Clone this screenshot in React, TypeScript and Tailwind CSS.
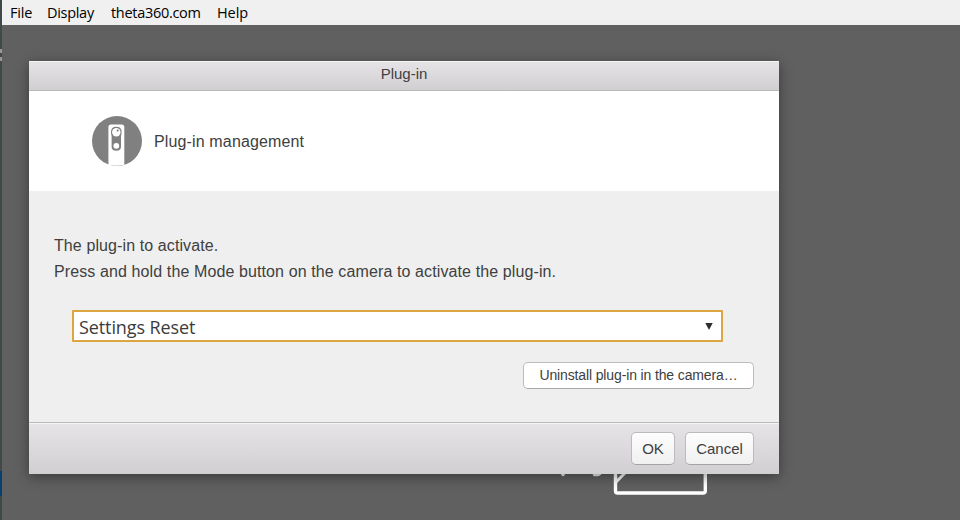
import React from "react";

function MenuBar() {
  return (
    <nav className="flex h-[25px] shrink-0 bg-[#f0f0f0] pl-2 font-['Open_Sans','Noto_Sans',sans-serif] text-[14.5px] leading-[25px] text-black">
      <span className="w-[37px] whitespace-nowrap tracking-[-0.2px]">File</span>
      <span className="w-[64px] whitespace-nowrap tracking-[-0.3px]">Display</span>
      <span className="w-[106px] whitespace-nowrap tracking-[-0.3px]">theta360.com</span>
      <span className="whitespace-nowrap tracking-[-0.1px]">Help</span>
    </nav>
  );
}

function CameraIcon() {
  return (
    <svg width="50" height="50" viewBox="0 0 50 50" className="shrink-0">
      <circle cx="25" cy="25" r="25" fill="#808080" />
      <path d="M16.400 48.800V11Q16.400 8.500 19 8.500H29.700Q32.300 8.500 32.300 11V48.800Q24.500 50.600 16.400 48.800Z" fill="#fff" />
      <path d="M19 16Q19 10.700 24.300 10.700T29.600 16Q29.600 18.500 29 20V30.500Q29 34.800 24.300 34.800T19.600 30.500V20Q19 18.500 19 16Z" fill="#808080" />
      <circle cx="24.300" cy="16.200" r="4.200" fill="#fff" />
      <circle cx="25.700" cy="14.600" r="1.100" fill="#808080" />
      <circle cx="24.300" cy="29.800" r="2.900" fill="#fff" />
    </svg>
  );
}

function Backdrop() {
  return (
    <svg className="absolute left-[540px] top-[460px]" width="200" height="50" viewBox="0 0 200 50" fill="none">
      <path d="M20.500 10L23 14.500L25.500 10" stroke="#eee" strokeWidth="3.500" strokeLinecap="round" strokeLinejoin="round" />
      <path d="M54.500 14.600H57Q60 14.300 61 11" stroke="#eee" strokeWidth="3.500" strokeLinecap="round" />
      <path d="M75.500 8V31Q75.500 33 77.500 33H163Q165.300 33 165.300 31V8" stroke="#fff" strokeWidth="3.400" />
      <path d="M76 22L86 12" stroke="#f5f5f5" strokeWidth="3" />
    </svg>
  );
}

function Dialog() {
  return (
    <section className="relative flex h-[413px] w-[750px] flex-col bg-[#efefef] text-[16px] text-[#404040] shadow-[0_3px_12px_rgba(0,0,0,0.4)]">
      <header className="h-[30px] shrink-0 border-b border-[#bbb9bc] bg-linear-to-b from-[#e7e4e7] to-[#d2cfd2] text-center text-[15px] leading-[26px] shadow-[inset_0_1px_0_#f6f4f6]">
        Plug-in
      </header>
      <div className="flex h-[100px] shrink-0 items-center gap-3 bg-white pl-[63px]">
        <CameraIcon />
        <span className="pt-[2px] tracking-[0.14px]">Plug-in management</span>
      </div>
      <div className="flex h-[231px] shrink-0 flex-col px-[25px] pt-[42px]">
        <p className="leading-[26px] tracking-[0.1px]">The plug-in to activate.</p>
        <p className="leading-[26px] tracking-[0.11px]">Press and hold the Mode button on the camera to activate the plug-in.</p>
        <button className="mt-[25px] ml-[18px] flex h-[32px] w-[651px] shrink-0 items-center justify-between rounded-[1px] border-2 border-[#dda53f] bg-white pr-[8px] pl-[5px] font-['Open_Sans','Noto_Sans',sans-serif] text-[18px] leading-7 text-[#3c3c3c]">
          <span className="pt-[2px] tracking-[-0.1px]">Settings Reset</span>
          <svg width="8" height="8" viewBox="0 0 8 8">
            <path d="M0.300 1H7.700L4 8Z" fill="#2d2d2d" />
          </svg>
        </button>
        <button className="mt-5 h-[27px] w-[231px] shrink-0 self-end rounded-[5px] border border-[#bcbcbc] border-b-[#a8a8a8] bg-white text-[14px] leading-[25px] tracking-[-0.13px]">
          Uninstall plug-in in the camera…
        </button>
      </div>
      <footer className="flex h-[52px] shrink-0 justify-end gap-[10px] border-t border-[#bbb9bc] bg-linear-to-b from-[#e7e4e7] to-[#d2cfd2] pt-[9px] pr-[25px] shadow-[inset_0_1px_0_#f6f4f6]">
        <button className="h-[33px] w-[44px] rounded-[5px] border border-[#bcbabd] border-b-[#a5a3a6] bg-linear-to-b from-[#fdfdfd] to-[#f0f0f0] pt-[2px] text-[15px]">OK</button>
        <button className="h-[33px] w-[69px] rounded-[5px] border border-[#bcbabd] border-b-[#a5a3a6] bg-linear-to-b from-[#fdfdfd] to-[#f0f0f0] pt-[2px] text-[15px]">Cancel</button>
      </footer>
    </section>
  );
}

export default function App() {
  return (
    <div className="relative flex h-[520px] w-[960px] overflow-hidden bg-[#606060] font-['Liberation_Sans',Arial,sans-serif]">
      <aside className="flex w-[2px] shrink-0 flex-col bg-[#414849]">
        <div className="mt-[49px] h-[4px] bg-[#999]" />
        <div className="mt-[4px] h-[4px] bg-[#999]" />
        <div className="mt-[410px] h-[25px] bg-[#073f70]" />
      </aside>
      <div className="flex grow flex-col">
        <MenuBar />
        <main className="pt-9 pl-[27px]">
          <Backdrop />
          <Dialog />
        </main>
      </div>
    </div>
  );
}
